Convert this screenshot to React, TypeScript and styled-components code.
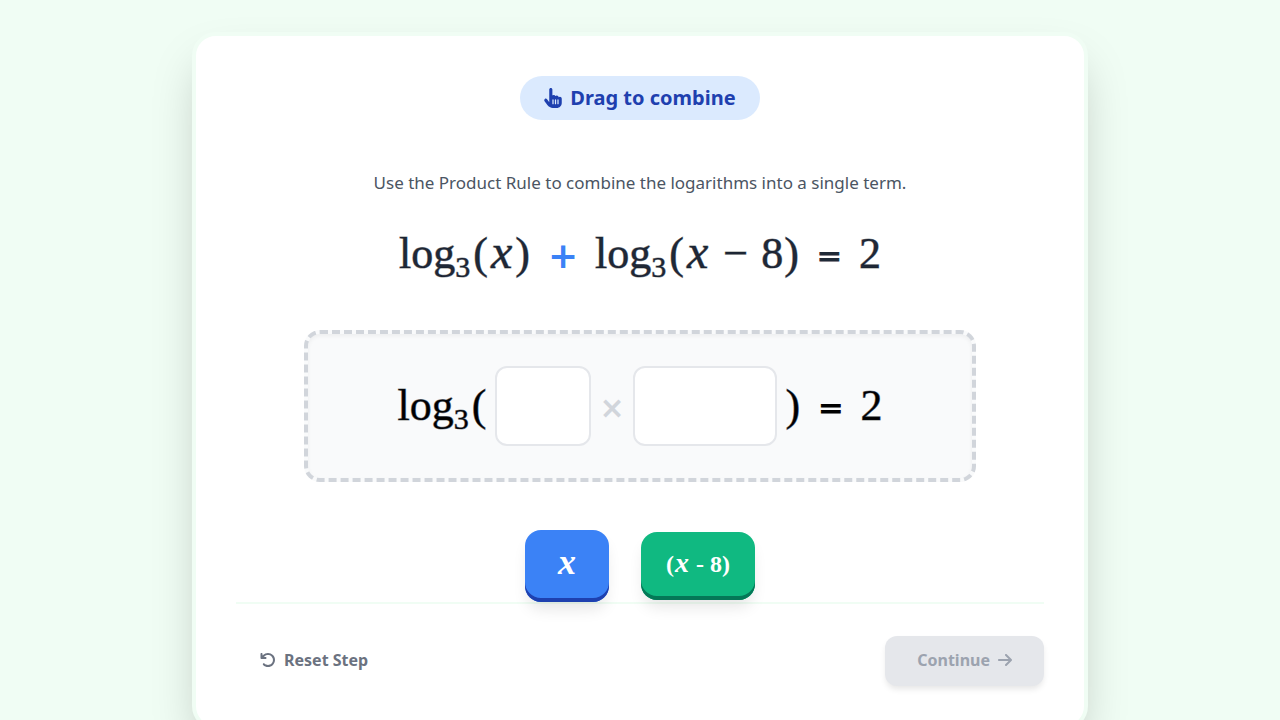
import React from "react";
import styled, { createGlobalStyle, css } from "styled-components";
import { FaArrowRight, FaArrowRotateLeft, FaHandPointer } from "react-icons/fa6";

const sans = `"Noto Sans", "DejaVu Sans Condensed", sans-serif`;
const serif = `"Liberation Serif", "Times New Roman", serif`;

const GlobalStyle = createGlobalStyle`
  *, *::before, *::after { box-sizing: border-box; }
  body {
    margin: 0;
    background: #f0fdf4;
    font-family: ${sans};
    color: #000;
  }
  ::-webkit-scrollbar { display: none; }
`;

const Page = styled.main`
  padding: 32px 16px;
`;

const Card = styled.section`
  max-width: 896px;
  margin: 0 auto;
  padding: 40px;
  background: #fff;
  border: 4px solid #f0fdf4;
  border-radius: 24px;
  box-shadow: 0 25px 50px -12px rgba(0, 0, 0, 0.25);
`;

const Step = styled.div`
  display: flex;
  flex-direction: column;
  align-items: center;
`;

const Badge = styled.h1`
  display: flex;
  align-items: center;
  gap: 8px;
  margin: 0 0 48px;
  padding: 8px 24px;
  border-radius: 22px;
  background: #dbeafe;
  color: #1e40af;
  font-size: 20px;
  line-height: 28px;
  font-weight: 700;

  svg { width: 18px; height: 20px; }
`;

const Instruction = styled.p`
  margin: 0 0 24px;
  color: #4b5563;
  font-size: 17px;
  line-height: 30px;
  text-align: center;
`;

const Equation = styled.div`
  display: flex;
  align-items: center;
  justify-content: center;
  gap: 17px;
  height: 64px;
  margin-bottom: 44px;
  color: #1f2937;
  white-space: nowrap;
`;

const Term = styled.span`
  font-family: ${serif};
  font-size: 44px;
  line-height: 64px;
  -webkit-text-stroke: 1px rgba(17, 24, 39, 0.5);
`;

const Variable = styled.i`
  padding: 0 2px;
  font-size: 48px;
  line-height: 0;
`;

const Paren = styled.span`
  padding: 0 1px;
`;

const Minus = styled.span`
  padding: 0 13px;
`;

const Sub = styled.sub`
  margin-right: 2px;
  font-size: 30px;
  line-height: 0;
  vertical-align: -9px;
`;

const Operator = styled.span<{ $kind: "plus" | "times" | "equals" }>`
  padding-top: 4px;
  font-family: "DejaVu Sans", sans-serif;
  line-height: 40px;
  ${({ $kind }) => $kind === "plus" && css`color: #3b82f6; font-size: 36px; font-weight: 700;`}
  ${({ $kind }) => $kind === "times" && css`color: #d1d5db; font-size: 30px; font-weight: 700;`}
  ${({ $kind }) => $kind === "equals" && css`font-size: 30px; -webkit-text-stroke: 1px currentColor;`}
`;

const DropZone = styled.div`
  display: flex;
  align-items: center;
  justify-content: center;
  gap: 8px;
  width: 100%;
  max-width: 672px;
  padding: 32px;
  border: 4px dashed #d1d5db;
  border-radius: 16px;
  background: #f9fafb;
  box-shadow: inset 0 2px 4px rgba(0, 0, 0, 0.05);
  white-space: nowrap;
`;

const Slot = styled.div<{ $wide?: boolean }>`
  width: ${({ $wide }) => ($wide ? 144 : 96)}px;
  height: 80px;
  border: 2px solid #e5e7eb;
  border-radius: 12px;
  background: #fff;
`;

const Result = styled.div`
  display: flex;
  align-items: center;
  gap: 17px;
`;

const Tiles = styled.div`
  display: flex;
  align-items: center;
  justify-content: center;
  gap: 32px;
  margin-top: 48px;
`;

const Tile = styled.button<{ $tone: "blue" | "green" }>`
  padding: 16px 20px 20px;
  border: 0;
  border-radius: 16px;
  color: #fff;
  cursor: grab;
  font-family: ${serif};
  font-weight: 700;

  i { line-height: 0; }

  ${({ $tone }) =>
    $tone === "blue"
      ? css`
          min-width: 84px;
          font-size: 30px;
          line-height: 36px;
          background: #3b82f6;
          box-shadow: inset 0 -4px 0 #1e40af, 0 10px 15px -3px rgba(0, 0, 0, 0.1);
          i { font-size: 36px; }
        `
      : css`
          min-width: 114px;
          font-size: 24px;
          line-height: 32px;
          background: #10b981;
          box-shadow: inset 0 -4px 0 #047857, 0 10px 15px -3px rgba(0, 0, 0, 0.1);
          i { padding: 0 1px; font-size: 28px; }
        `}
`;

const Footer = styled.footer`
  display: flex;
  align-items: center;
  justify-content: space-between;
  padding-top: 32px;
  border-top: 2px solid #f0fdf4;
`;

const Action = styled.button<{ $filled?: boolean }>`
  display: flex;
  align-items: center;
  gap: 8px;
  padding: 12px 24px 14px;
  border: 0;
  border-radius: 12px;
  background: transparent;
  color: #6b7280;
  font-family: ${sans};
  font-size: 16px;
  line-height: 24px;
  font-weight: 700;
  ${({ $filled }) =>
    $filled &&
    css`
      padding: 12px 32px 14px;
      background: #e5e7eb;
      color: #9ca3af;
      box-shadow: 0 4px 6px -1px rgba(0, 0, 0, 0.1);

      svg { width: 14px; }
    `}
`;

export default function App() {
  return (
    <Page>
      <GlobalStyle />
      <Card>
        <Step>
          <Badge>
            <FaHandPointer />
            Drag to combine
          </Badge>
          <Instruction>Use the Product Rule to combine the logarithms into a single term.</Instruction>
          <Equation>
            <Term>log<Sub>3</Sub><Paren>(</Paren><Variable>x</Variable><Paren>)</Paren></Term>
            <Operator $kind="plus">+</Operator>
            <Term>
              log<Sub>3</Sub><Paren>(</Paren><Variable>x</Variable><Minus>−</Minus>8<Paren>)</Paren>
            </Term>
            <Operator $kind="equals">=</Operator>
            <Term>2</Term>
          </Equation>
          <DropZone>
            <Term>log<Sub>3</Sub><Paren>(</Paren></Term>
            <Slot />
            <Operator $kind="times">×</Operator>
            <Slot $wide />
            <Result>
              <Term><Paren>)</Paren></Term>
              <Operator $kind="equals">=</Operator>
              <Term>2</Term>
            </Result>
          </DropZone>
          <Tiles>
            <Tile type="button" $tone="blue"><i>x</i></Tile>
            <Tile type="button" $tone="green">(<i>x</i> - 8)</Tile>
          </Tiles>
        </Step>
        <Footer>
          <Action type="button"><FaArrowRotateLeft size={16} />Reset Step</Action>
          <Action type="button" $filled disabled>Continue<FaArrowRight size={16} /></Action>
        </Footer>
      </Card>
    </Page>
  );
}
